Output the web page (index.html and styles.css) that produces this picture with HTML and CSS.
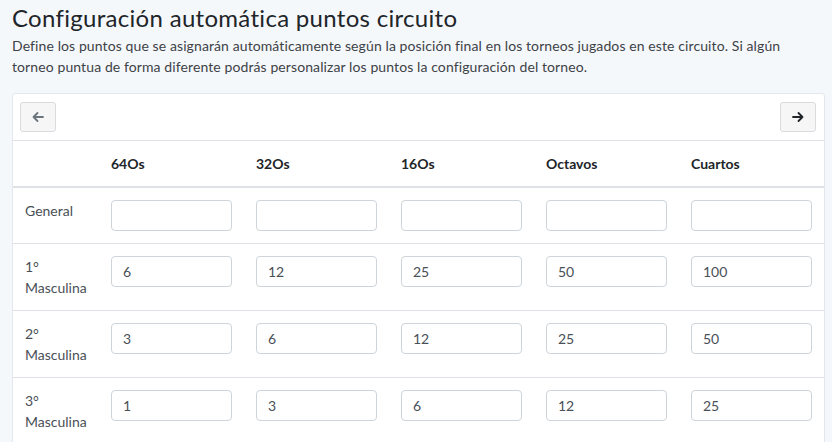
FILE: index.html
```html
<!DOCTYPE html>
<html lang="es">
<head>
    <meta charset="UTF-8">
    <meta name="viewport" content="width=device-width, initial-scale=1.0">
    <title>Configuración automática puntos circuito</title>
    <link rel="stylesheet" href="styles.css">
</head>
<body>
    <div class="page">
        <h1 class="page-title">Configuración automática puntos circuito</h1>
        <p class="page-desc">Define los puntos que se asignarán automáticamente según la posición final en los torneos jugados en este circuito. Si algún torneo puntua de forma diferente podrás personalizar los puntos la configuración del torneo.</p>

        <div class="points-card">
            <div class="card-toolbar">
                <button type="button" class="nav-button" disabled>
                    <svg width="14" height="14" viewBox="0 0 14 14"><path d="M12 7H2.5M6.5 3L2.5 7l4 4" fill="none" stroke="currentColor" stroke-width="1.8" stroke-linecap="round" stroke-linejoin="round"/></svg>
                </button>
                <button type="button" class="nav-button">
                    <svg width="14" height="14" viewBox="0 0 14 14"><path d="M2 7h9.5M7.5 3l4 4-4 4" fill="none" stroke="currentColor" stroke-width="1.8" stroke-linecap="round" stroke-linejoin="round"/></svg>
                </button>
            </div>
            <table class="points-table">
                <colgroup>
                    <col class="col-label">
                    <col><col><col><col><col>
                </colgroup>
                <thead>
                    <tr>
                        <th></th>
                        <th>64Os</th>
                        <th>32Os</th>
                        <th>16Os</th>
                        <th>Octavos</th>
                        <th>Cuartos</th>
                    </tr>
                </thead>
                <tbody>
                    <tr>
                        <td class="row-label">General</td>
                        <td><input type="text" class="point-input"></td>
                        <td><input type="text" class="point-input"></td>
                        <td><input type="text" class="point-input"></td>
                        <td><input type="text" class="point-input"></td>
                        <td><input type="text" class="point-input"></td>
                    </tr>
                    <tr>
                        <td class="row-label">1°<br>Masculina</td>
                        <td><input type="text" class="point-input" value="6"></td>
                        <td><input type="text" class="point-input" value="12"></td>
                        <td><input type="text" class="point-input" value="25"></td>
                        <td><input type="text" class="point-input" value="50"></td>
                        <td><input type="text" class="point-input" value="100"></td>
                    </tr>
                    <tr>
                        <td class="row-label">2°<br>Masculina</td>
                        <td><input type="text" class="point-input" value="3"></td>
                        <td><input type="text" class="point-input" value="6"></td>
                        <td><input type="text" class="point-input" value="12"></td>
                        <td><input type="text" class="point-input" value="25"></td>
                        <td><input type="text" class="point-input" value="50"></td>
                    </tr>
                    <tr>
                        <td class="row-label">3°<br>Masculina</td>
                        <td><input type="text" class="point-input" value="1"></td>
                        <td><input type="text" class="point-input" value="3"></td>
                        <td><input type="text" class="point-input" value="6"></td>
                        <td><input type="text" class="point-input" value="12"></td>
                        <td><input type="text" class="point-input" value="25"></td>
                    </tr>
                </tbody>
            </table>
        </div>
    </div>
</body>
</html>
```

FILE: styles.css
```css
/* Page base */
body {
    font-family: Lato, "Open Sans", sans-serif;
    font-size: 14px;
    line-height: 1.5;
    color: #212529;
    background-color: #f5f8fb;
    margin: 0;
}
.page {
    padding: 4px 7px 0 12px;
}
.page-title {
    font-size: 24px;
    font-weight: 400;
    line-height: 1.2;
    letter-spacing: 0.3px;
    margin: 0 0 2px;
}
.page-desc {
    color: #3d4247;
    letter-spacing: 0.1px;
    margin: 0 0 16px;
}

/* Card with the points table */
.points-card {
    background-color: #fff;
    border: 1px solid #e3e8ee;
    border-radius: 3px;
}
.card-toolbar {
    display: flex;
    justify-content: space-between;
    padding: 8px 8px 8px 7px;
    border-bottom: 1px solid #dee2e6;
}
.nav-button {
    width: 36px;
    height: 30px;
    display: flex;
    align-items: center;
    justify-content: center;
    background-color: #f6f6f6;
    border: 1px solid #d9dcdf;
    border-radius: 3px;
    color: #212529;
    padding: 0;
}
.nav-button:disabled {
    color: #6c757d;
}

.points-table {
    width: 100%;
    border-collapse: collapse;
    table-layout: fixed;
}
.col-label {
    width: 86px;
}
.points-table th,
.points-table td {
    padding: 12px;
    text-align: left;
    vertical-align: top;
}
.points-table th {
    font-weight: 700;
    border-bottom: 2px solid #dee2e6;
}
.points-table tbody tr + tr td {
    border-top: 1px solid #dee2e6;
}
.row-label {
    color: #495057;
}
.point-input {
    display: block;
    width: 100%;
    box-sizing: border-box;
    height: 31px;
    padding: 4px 11px;
    font-family: inherit;
    font-size: 14px;
    color: #495057;
    border: 1px solid #ced4da;
    border-radius: 4px;
    background-color: #fff;
}
```
